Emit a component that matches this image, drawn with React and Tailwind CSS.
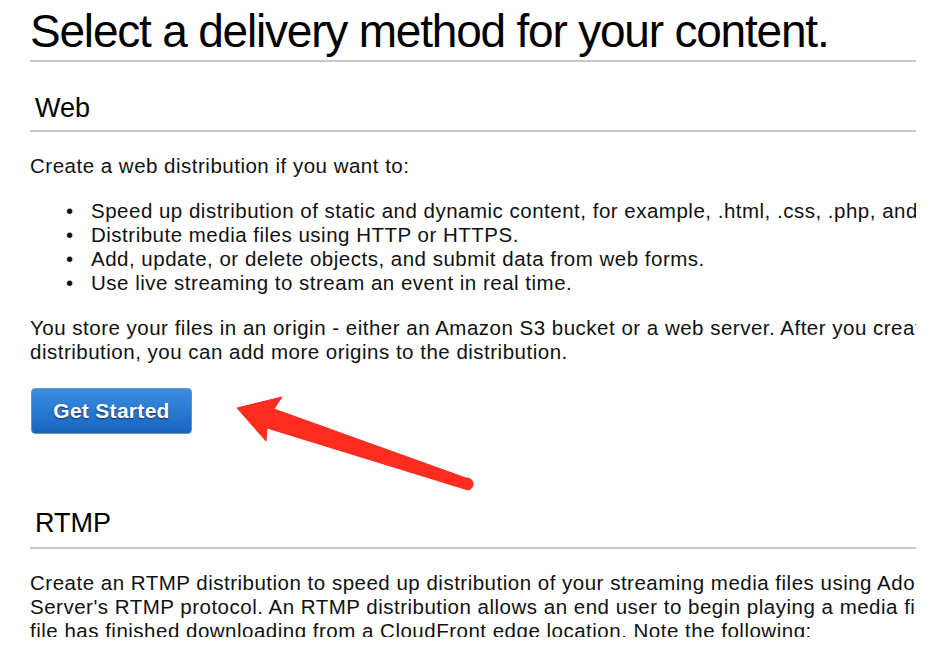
const bullets = [
  "Speed up distribution of static and dynamic content, for example, .html, .css, .php, and graphics files.",
  "Distribute media files using HTTP or HTTPS.",
  "Add, update, or delete objects, and submit data from web forms.",
  "Use live streaming to stream an event in real time.",
];

export default function App() {
  return (
    <div className="relative h-[655px] w-[937px] overflow-hidden bg-white font-['Liberation_Sans',Arial,sans-serif] text-[#111]">
      {/* content column, clipped on the right and bottom */}
      <div className="ml-[30px] h-[637px] w-[886px] overflow-hidden">
        <h1 className="mt-[6px] whitespace-nowrap text-[46px] leading-[50px] tracking-[-1.2px] text-black">
          Select a delivery method for your content.
        </h1>
        <div className="mt-[4px] h-[2px] bg-[#c8c8c8]" />

        {/* Web */}
        <h2 className="ml-[5px] mt-[30px] text-[27px] leading-[32px] text-black">Web</h2>
        <div className="mt-[6px] h-[2px] bg-[#c8c8c8]" />

        <div className="text-[20.5px] leading-[24px] tracking-[0.5px]">
          <p className="mt-[22px] whitespace-nowrap">Create a web distribution if you want to:</p>
          <ul className="mt-[21px] whitespace-nowrap pl-[36px]">
            {bullets.map((b) => (
              <li key={b} className="flex">
                <span className="w-[25px] shrink-0">•</span>
                <span>{b}</span>
              </li>
            ))}
          </ul>
          <p className="mt-[21px] whitespace-nowrap">
            You store your files in an origin - either an Amazon S3 bucket or a web server. After you create the
            <br />
            distribution, you can add more origins to the distribution.
          </p>
        </div>

        <button
          type="button"
          className="ml-[1px] mt-[24px] flex h-[46px] w-[161px] items-center justify-center rounded-[4px] border border-[#6f8fb5] bg-gradient-to-b from-[#3b8fe2] to-[#1764c0] text-[21px] font-bold tracking-[0.3px] text-white [text-shadow:0_1px_2px_rgba(0,0,0,0.6)]"
        >
          Get Started
        </button>

        {/* RTMP */}
        <h2 className="ml-[5px] mt-[73px] text-[27px] leading-[32px] text-black">RTMP</h2>
        <div className="mt-[8px] h-[2px] bg-[#c8c8c8]" />

        <p className="mt-[22px] whitespace-nowrap text-[20.5px] leading-[24px] tracking-[0.5px]">
          Create an RTMP distribution to speed up distribution of your streaming media files using Adobe Flash Media
          <br />
          Server's RTMP protocol. An RTMP distribution allows an end user to begin playing a media file before the
          <br />
          file has finished downloading from a CloudFront edge location. Note the following:
        </p>
      </div>

      {/* red annotation arrow over the page */}
      <svg className="pointer-events-none absolute left-0 top-0" width="937" height="655" viewBox="0 0 937 655">
        <path
          d="M237 408 L282 397 L274 409 L466 478 A6 6 0 0 1 468 490 L267 428 L266 441 Z"
          fill="#fe2b1f"
          stroke="#fe2b1f"
          strokeWidth="1"
          strokeLinejoin="round"
        />
      </svg>
    </div>
  );
}
